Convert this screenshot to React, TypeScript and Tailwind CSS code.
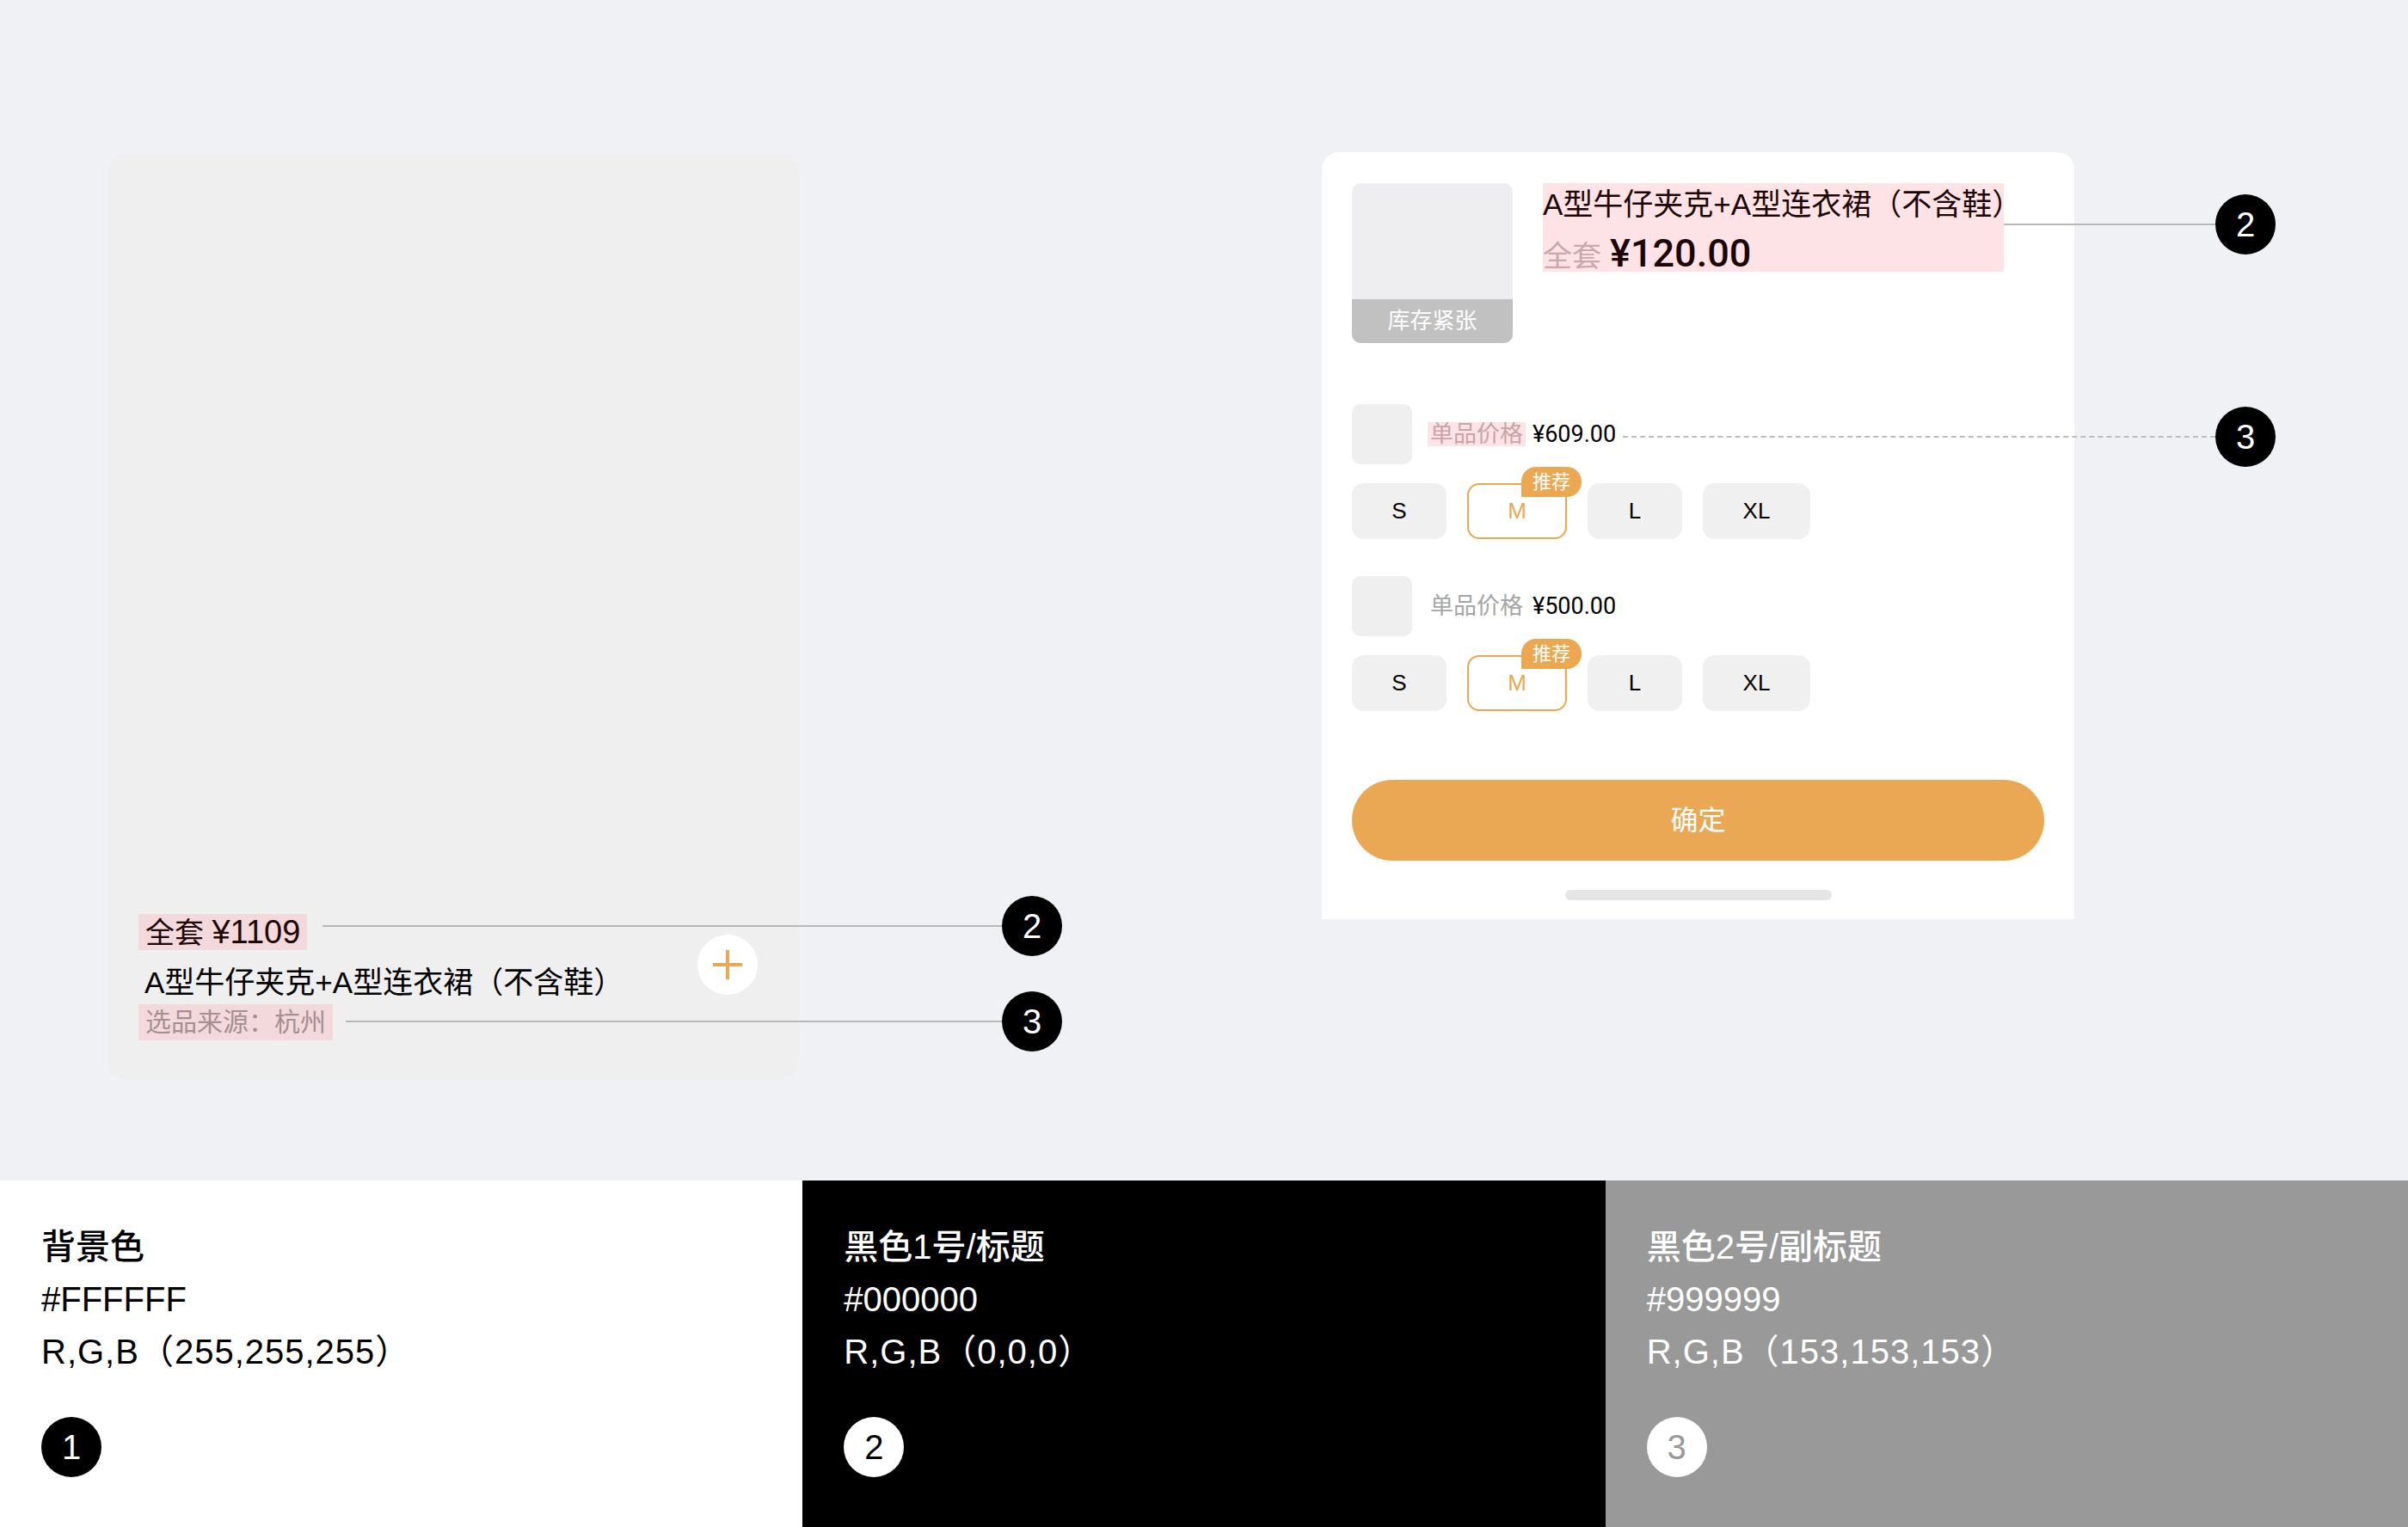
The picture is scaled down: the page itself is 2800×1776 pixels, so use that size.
import React from "react"

const sans = "font-['Liberation_Sans','Noto_Sans_CJK_SC',sans-serif]"
const num = "font-['Roboto','Noto_Sans_CJK_SC',sans-serif]"

const sizes = [
    { label: "S", w: "w-[110px]", active: false },
    { label: "M", w: "w-[116px]", active: true },
    { label: "L", w: "w-[110px]", active: false },
    { label: "XL", w: "w-[125px]", active: false },
]

const swatches = [
    { title: "背景色", hex: "#FFFFFF", rgb: "R,G,B（255,255,255）", n: "1", box: "bg-white text-black", dot: "bg-black text-white" },
    { title: "黑色1号/标题", hex: "#000000", rgb: "R,G,B（0,0,0）", n: "2", box: "bg-black text-white", dot: "bg-white text-black" },
    { title: "黑色2号/副标题", hex: "#999999", rgb: "R,G,B（153,153,153）", n: "3", box: "bg-[#999999] text-white", dot: "bg-white text-[#999999]" },
]

const Marker = ({ n }: { n: string }) => (
    <div className="w-[70px] h-[70px] shrink-0 rounded-full bg-black text-white flex items-center justify-center text-[40px] leading-none">
        {n}
    </div>
)

const SizeRow = () => (
    <div className="flex gap-[24px] mt-[22px]">
        {sizes.map((s) =>
            s.active ? (
                <div
                    key={s.label}
                    className={`relative ${s.w} h-[65px] rounded-[14px] border-2 border-[#eba851] bg-white flex items-center justify-center text-[26px] text-[#eba851]`}
                >
                    {s.label}
                    <span className="absolute -right-[19px] -top-[21px] w-[70px] h-[35px] rounded-[17px] rounded-bl-none bg-[#eba851] text-white text-[22px] leading-[35px] text-center">
                        推荐
                    </span>
                </div>
            ) : (
                <div
                    key={s.label}
                    className={`${s.w} h-[65px] rounded-[14px] bg-[#f0f0f0] flex items-center justify-center text-[26px] text-black`}
                >
                    {s.label}
                </div>
            )
        )}
    </div>
)

const ItemRow = ({ price, marked }: { price: string; marked?: boolean }) => (
    <div className="flex items-center h-[70px]">
        <div className="w-[70px] h-[70px] rounded-[10px] bg-[#efeff0]" />
        <span
            className={`ml-[18px] px-[3px] h-[28px] leading-[28px] text-[27px] ${
                marked ? "bg-[#fde3e5] text-[#c9a4a8]" : "text-[#a6a6a6]"
            }`}
        >
            单品价格
        </span>
        <span className={`ml-[8px] text-[27px] leading-[28px] text-black ${num}`}>{price}</span>
    </div>
)

export default function App() {
    return (
        <div className={`w-[2800px] h-[1776px] ${sans}`}>
            <div className="h-[1373px] bg-[#f0f1f5] flex items-start pl-[125px] pt-[177px]">
                {/* list card */}
                <div className="relative mt-[2px] w-[804px] h-[1076px] rounded-[20px] bg-[#efeff0] flex flex-col justify-end pl-[36px] pr-[48px] pb-[45px]">
                    <div className="flex items-center justify-between">
                        <div className="flex flex-col items-start">
                            <span className="px-[8px] h-[42px] leading-[42px] bg-[#f3d9db] text-[#1d0707] text-[34px] whitespace-nowrap">
                                全套 <span className="font-medium text-[38px]">¥1109</span>
                            </span>
                            <span className="mt-[13px] pl-[7px] h-[50px] leading-[50px] text-[35px] text-black whitespace-nowrap">
                                A型牛仔夹克+A型连衣裙（不含鞋）
                            </span>
                            <span className="px-[8px] h-[42px] leading-[42px] bg-[#f3d9db] text-[#a68f91] text-[30px]">
                                选品来源：杭州
                            </span>
                        </div>
                        <div className="mb-[29px] w-[70px] h-[70px] rounded-full bg-white flex items-center justify-center">
                            <svg width="36" height="36" viewBox="0 0 36 36">
                                <path d="M18 1v34M1 18h34" stroke="#eba851" strokeWidth="4" />
                            </svg>
                        </div>
                    </div>

                    <div className="absolute left-[250px] top-[863px] flex items-center">
                        <div className="w-[790px] h-[2px] bg-[#b8b8b8]" />
                        <Marker n="2" />
                    </div>
                    <div className="absolute left-[277px] top-[974px] flex items-center">
                        <div className="w-[763px] h-[2px] bg-[#b8b8b8]" />
                        <Marker n="3" />
                    </div>
                </div>

                {/* sku sheet */}
                <div className="relative ml-[608px] w-[875px] h-[892px] rounded-t-[20px] bg-white px-[35px] pt-[36px] flex flex-col">
                    <div className="flex gap-[35px]">
                        <div className="w-[187px] h-[186px] rounded-[10px] overflow-hidden bg-[#eeeef0] flex flex-col justify-end">
                            <div className="h-[51px] bg-[#c1c1c1] text-white text-[26px] leading-[51px] text-center">库存紧张</div>
                        </div>
                        <div className="w-[536px] h-[103px] bg-[#fde3e5] flex flex-col">
                            <div className="text-[35px] leading-[50px] text-[#1c0606] whitespace-nowrap">
                                A型牛仔夹克+A型连衣裙（不含鞋）
                            </div>
                            <div className="mt-auto flex items-baseline leading-[36px]">
                                <span className="text-[34px] text-[#c9a7aa]">全套</span>
                                <span className={`ml-[10px] text-[45px] font-medium text-[#1c0606] ${num}`}>¥120.00</span>
                            </div>
                        </div>
                    </div>

                    <div className="mt-[71px]">
                        <ItemRow price="¥609.00" marked />
                        <SizeRow />
                    </div>
                    <div className="mt-[43px]">
                        <ItemRow price="¥500.00" />
                        <SizeRow />
                    </div>

                    <button className="mt-[80px] h-[94px] w-full rounded-full bg-[#eba854] text-white text-[32px]">确定</button>
                    <div className="mt-[34px] mx-auto w-[310px] h-[12px] rounded-full bg-[#e5e5e5]" />

                    <div className="absolute left-[793px] top-[49px] flex items-center">
                        <div className="w-[246px] h-[2px] bg-[#b8b8b8]" />
                        <Marker n="2" />
                    </div>
                    <div className="absolute left-[350px] top-[296px] flex items-center">
                        <div className="w-[689px] border-t-2 border-dashed border-[#bdbdbd]" />
                        <Marker n="3" />
                    </div>
                </div>
            </div>

            <div className="grid grid-cols-3 h-[403px]">
                {swatches.map((s) => (
                    <div key={s.n} className={`${s.box} pl-[48px] pt-[47px]`}>
                        <div className="text-[40px] leading-[61px] font-medium">{s.title}</div>
                        <div className="text-[40px] leading-[61px]">{s.hex}</div>
                        <div className="text-[40px] leading-[61px] tracking-[1px]">{s.rgb}</div>
                        <div className={`mt-[45px] w-[70px] h-[70px] rounded-full ${s.dot} flex items-center justify-center text-[40px] leading-none`}>
                            {s.n}
                        </div>
                    </div>
                ))}
            </div>
        </div>
    )
}
